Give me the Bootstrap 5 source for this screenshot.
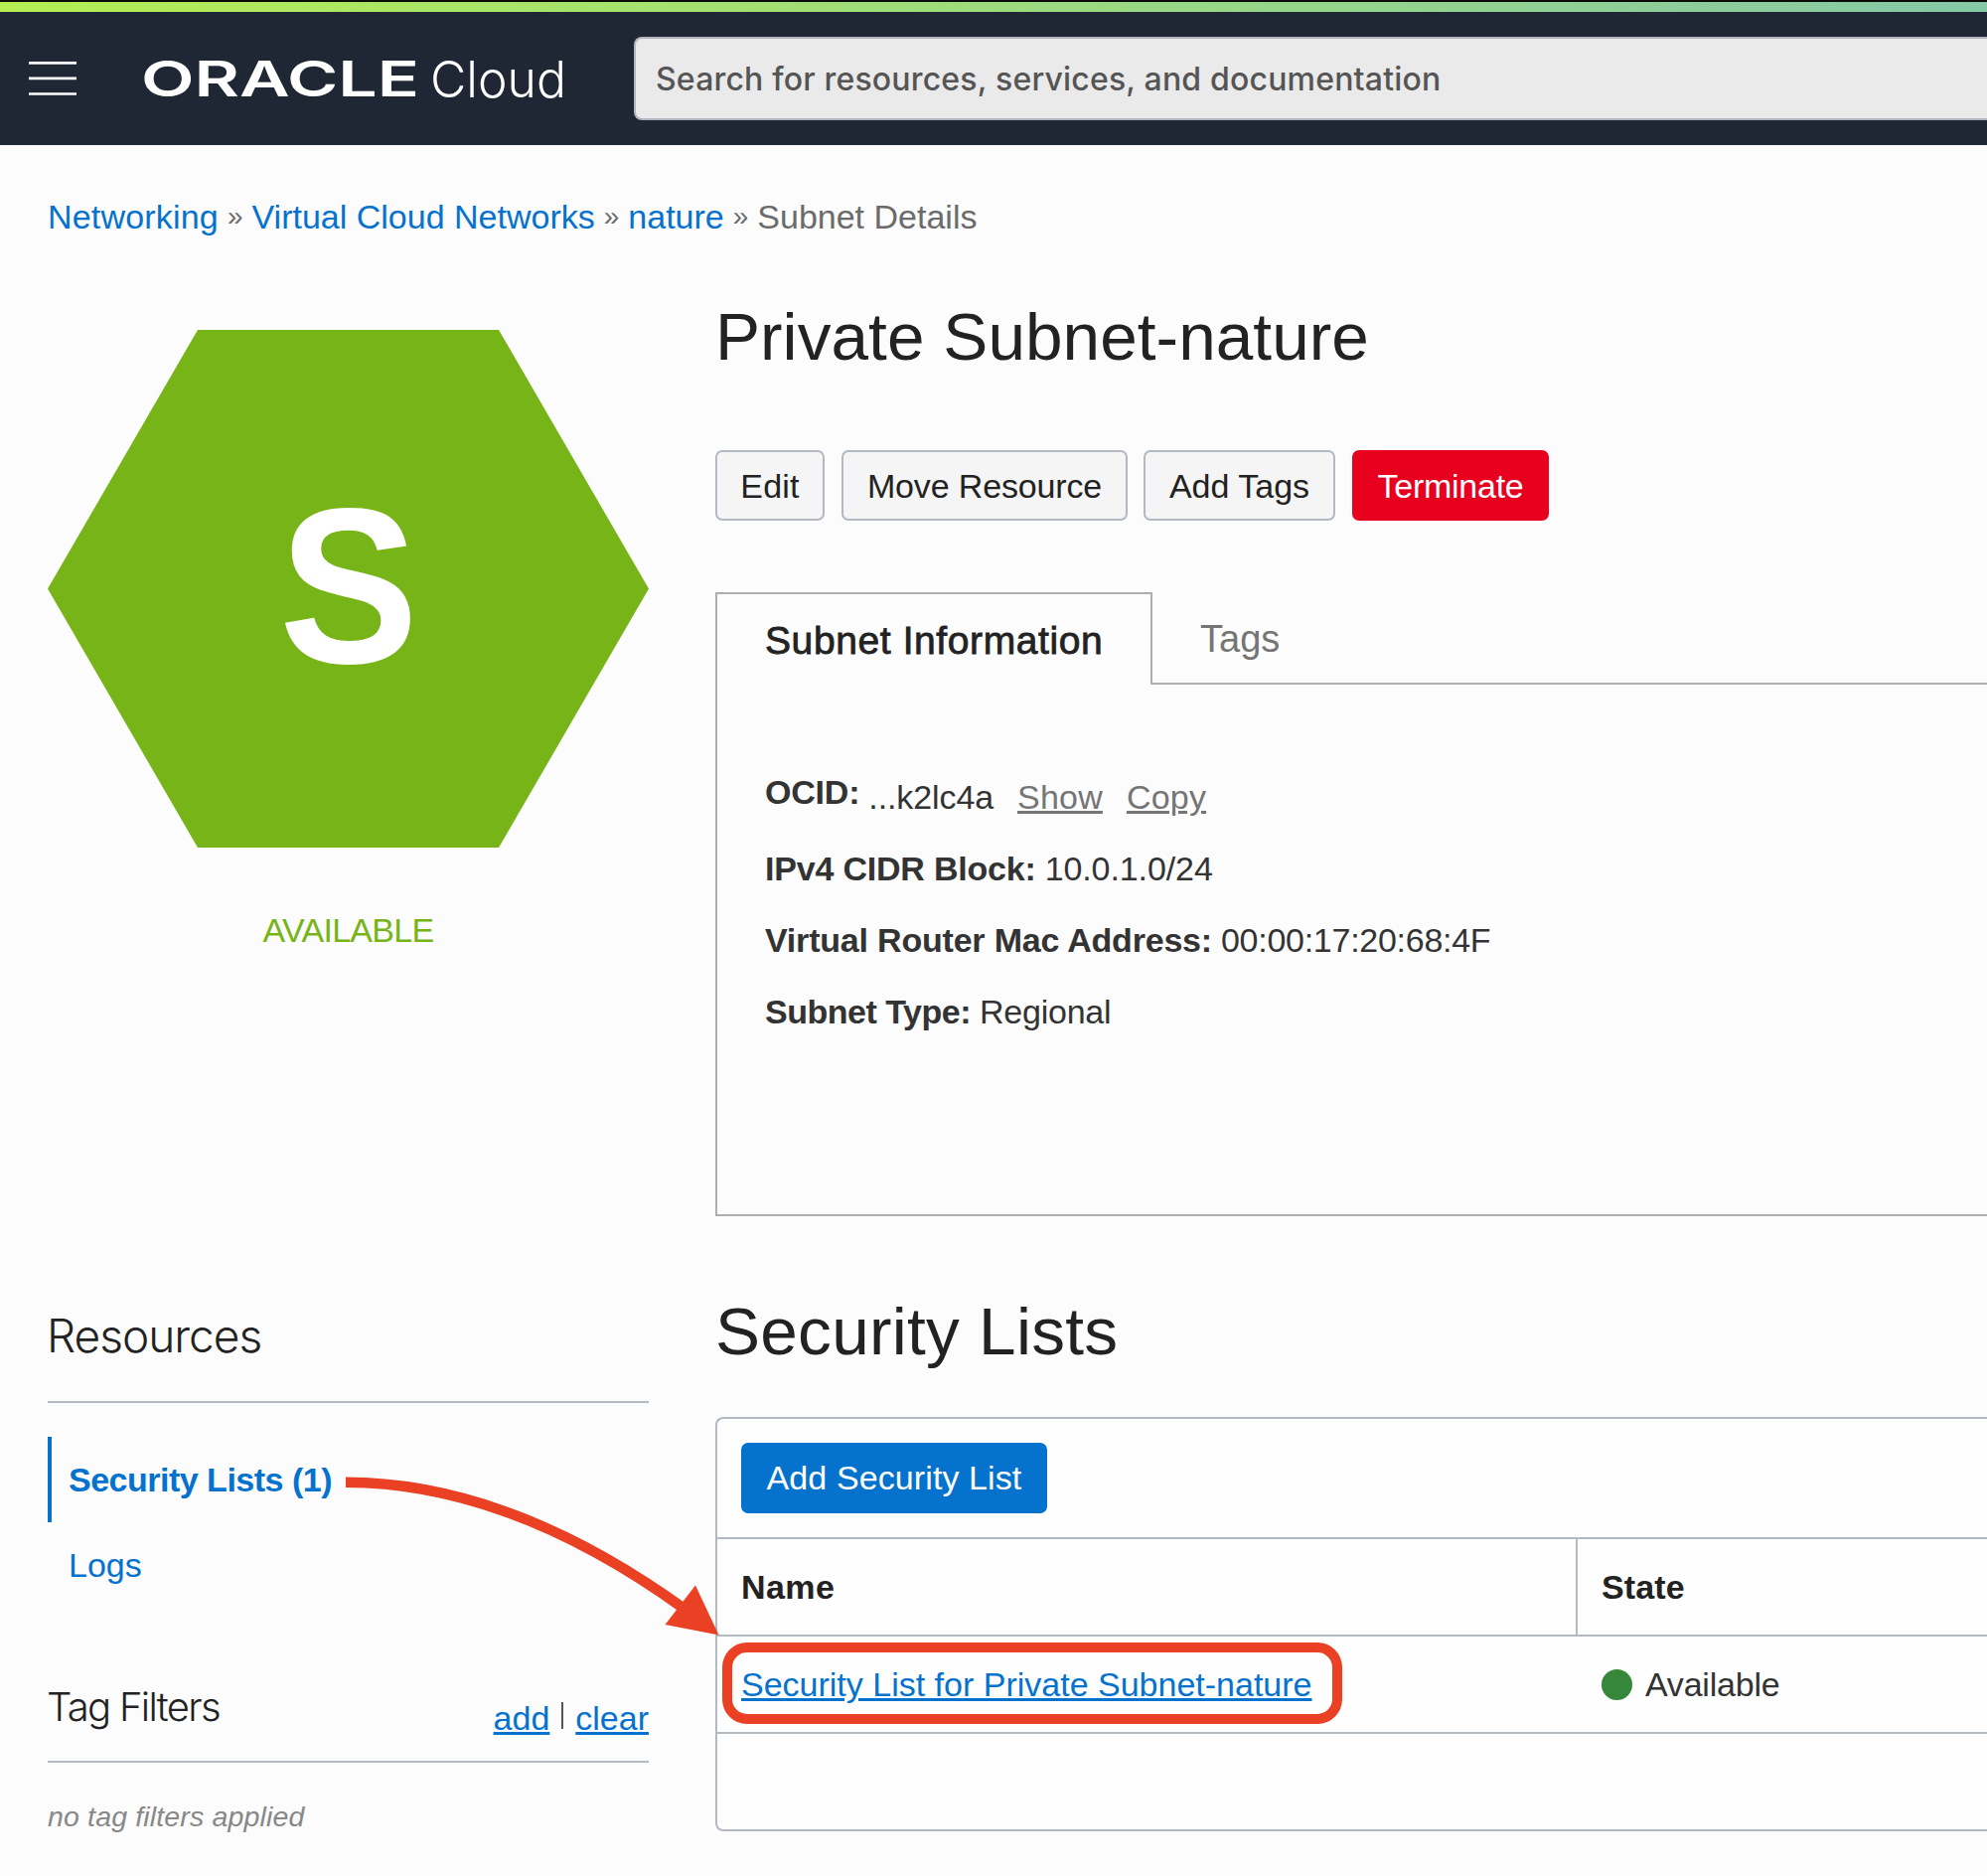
<!DOCTYPE html>
<html lang="en">
<head>
<meta charset="utf-8">
<meta name="viewport" content="width=device-width, initial-scale=1">
<title>Private Subnet-nature</title>
<link href="https://cdn.jsdelivr.net/npm/bootstrap@5.3.0/dist/css/bootstrap.min.css" rel="stylesheet">
<style>
:root{--link:#0572ce;--line:#b2b9c3;--hot:#ea4024}
body{font-family:"Liberation Sans",Arial,sans-serif;font-size:34px;line-height:40px;color:#333;background:#fcfcfc;width:2000px;height:1888px;overflow:hidden;position:relative}
a{color:var(--link)}
.top-black{height:2px;background:#0b0b08}
.top-stripe{height:10px;background:linear-gradient(90deg,#b4ee53,#85c8a6)}
.top-nav{height:134px;background:#1e2733;padding:0 0 0 29px;flex-wrap:nowrap;justify-content:flex-start}
.brand-cell{width:561px;padding-left:66px}
.brand-cell svg{overflow:visible}
.search-box{height:84px;border:2px solid #b0b5bf;border-right:0;border-radius:8px 0 0 8px;background:#eaeaea;color:#555;font-family:Inter,sans-serif;font-size:32px;font-weight:450;letter-spacing:.18px;padding:1px 20px;line-height:80px}
.crumbs{padding:52px 0 0 48px;color:#6b6b6b}
.crumbs a{text-decoration:none}
.crumbs a:first-child{letter-spacing:.19px}
.crumbs .sep{font-size:28px;margin:0 9px}
.side{width:605px;margin-left:48px;margin-right:67px}
.hexagon{margin-top:94px}
.state-text{margin-top:63px;color:#77b418;letter-spacing:-.7px}
.page-title{font-size:67.5px;line-height:80px;color:#222;margin:61px 0 0;font-weight:400;letter-spacing:.06px}
.actions{margin-top:74px;gap:17px}
.actions .btn,.btn-add{height:71px;font-size:34px;line-height:40px;border-radius:7px;border-width:2px;padding:0;display:flex;align-items:center;justify-content:center}
.btn-plain{background:#f5f5f5;border-color:var(--line);color:#222}
.btn-end{background:#e8001f;border-color:#e8001f;color:#fff;letter-spacing:-.25px}
.w-edit{width:110px;letter-spacing:.2px}
.w-move{width:288px;letter-spacing:-.15px;margin-right:-1px}
.w-tags{width:193px}
.w-end{width:198px}
.tab-strip{margin-top:72px;height:93px}
.tab-on{width:440px;border:2px solid #aeaeae;border-bottom:0;padding:25px 0 0 48px;font-size:39px;line-height:44px;color:#222;-webkit-text-stroke:.8px #222;letter-spacing:.6px}
.tab-off{border-bottom:2px solid #aeaeae;padding:25px 0 0 48px;font-size:38px;line-height:44px;color:#757575}
.info{height:535px;border:2px solid #aeaeae;border-width:0 0 2px 2px;padding:77px 0 0 48px}
.info-row{height:72px;line-height:72px;white-space:nowrap;display:flex;align-items:center;gap:9px;letter-spacing:-.1px}
.info-row b{letter-spacing:-.2px}
.info-row a{color:#757575;margin-left:15px;letter-spacing:.2px}
.info-row.tight{letter-spacing:-.27px}
.info-row.tighter,.info-row.tighter b{letter-spacing:-.48px}
.info-row.tighter span{letter-spacing:-.25px}
.ocid-label{margin-bottom:10px}
.side-title{margin-top:93px;height:95px;border-bottom:2px solid var(--line);font-family:Inter,sans-serif;font-size:46px;line-height:55px;color:#222;font-weight:300;letter-spacing:-1px;text-indent:-1px}
.side-nav{margin-top:34px}
.side-nav a{height:86px;line-height:86px;padding:0 0 0 17px;border-left:4px solid transparent;color:var(--link)}
.side-nav a.active{border-left-color:var(--link);font-weight:700;letter-spacing:-.5px}
.filters{margin-top:76px;height:80px;border-bottom:2px solid var(--line)}
.filters h3{font-family:Inter,sans-serif;font-size:40px;line-height:47px;color:#222;margin:0;font-weight:300;letter-spacing:-1.7px;text-indent:-1px}
.filters .tools{margin-top:15px}
.tool-bar{width:2px;height:27px;background:#555;margin:4px 12px 0}
.no-filters{margin-top:36px;font-size:28.5px;line-height:36px;color:#888;font-style:italic;letter-spacing:.15px}
.lists-title{margin-top:76px;letter-spacing:.28px}
.list-box{margin-top:46px;height:417px;border:2px solid var(--line);border-right:0;border-radius:8px 0 0 8px;background:#fefefe}
.list-tools{height:121px;padding:24px 0 0 24px;border-bottom:2px solid var(--line)}
.btn-add{width:308px;background:var(--link);color:#fff;border:0;padding-bottom:1px;letter-spacing:.1px}
.list-table{border-collapse:separate;border-spacing:0;table-layout:fixed;margin:0;--bs-table-bg:transparent;color:#333}
.list-table th,.list-table td{height:98px;padding:0 0 0 24px;border-bottom:2px solid var(--line);vertical-align:middle}
.list-table th{color:#222;letter-spacing:.15px}
.list-table td span{letter-spacing:-.2px}
.list-table th:first-child{width:866px;border-right:2px solid var(--line);letter-spacing:.4px}
.dot{width:31px;height:31px;border-radius:50%;background:#37873a;margin-right:13px}
.overlay{left:0;top:0;pointer-events:none}
</style>
</head>
<body>
<div class="top-black"></div><div class="top-stripe"></div>
<nav class="navbar top-nav">
  <svg width="48" height="36" viewBox="0 0 48 36" stroke="#fff" stroke-width="2.7"><path d="M0 2.3h48M0 17.8h48M0 33.5h48"/></svg>
  <div class="brand-cell flex-shrink-0">
    <svg width="430" height="60" viewBox="0 0 430 60" fill="#fff" class="d-block">
      <text x="-1" y="48" font-family="Inter" font-weight="560" font-size="49" textLength="280" lengthAdjust="spacingAndGlyphs">ORACLE</text>
      <text x="290" y="48.500" font-family="Inter" font-weight="300" font-size="51" textLength="137" lengthAdjust="spacingAndGlyphs">Cloud</text>
    </svg>
  </div>
  <div class="search-box flex-grow-1">Search for resources, services, and documentation</div>
</nav>
<div class="crumbs d-flex">
  <a href="#">Networking</a><span class="sep">»</span><a href="#">Virtual Cloud Networks</a><span class="sep">»</span><a href="#">nature</a><span class="sep">»</span><span>Subnet Details</span>
</div>
<div class="d-flex">
  <aside class="side flex-shrink-0">
    <svg class="hexagon d-block" width="605" height="521" viewBox="0 0 605 521"><path fill="#77b418" d="M151 0h303L605 260.500 454 521H151L0 260.500z"/><text x="233" y="334.500" textLength="140" lengthAdjust="spacingAndGlyphs" font-weight="700" font-size="222" fill="#fff">S</text></svg>
    <div class="state-text text-center">AVAILABLE</div>
  </aside>
  <main class="flex-grow-1">
    <h1 class="page-title">Private Subnet-nature</h1>
    <div class="actions d-flex">
      <button class="btn btn-plain w-edit">Edit</button>
      <button class="btn btn-plain w-move">Move Resource</button>
      <button class="btn btn-plain w-tags">Add Tags</button>
      <button class="btn btn-end w-end">Terminate</button>
    </div>
    <div class="tab-strip d-flex">
      <div class="tab-on">Subnet Information</div>
      <div class="tab-off flex-grow-1">Tags</div>
    </div>
    <div class="info">
      <div class="info-row"><b class="ocid-label">OCID:</b><span>...k2lc4a</span><a href="#">Show</a><a href="#">Copy</a></div>
      <div class="info-row"><b>IPv4 CIDR Block:</b><span>10.0.1.0/24</span></div>
      <div class="info-row tight"><b>Virtual Router Mac Address:</b><span>00:00:17:20:68:4F</span></div>
      <div class="info-row tighter"><b>Subnet Type:</b><span>Regional</span></div>
    </div>
  </main>
</div>
<div class="d-flex">
  <aside class="side flex-shrink-0">
    <h2 class="side-title">Resources</h2>
    <nav class="side-nav nav flex-column">
      <a href="#" class="nav-link active">Security Lists (1)</a>
      <a href="#" class="nav-link">Logs</a>
    </nav>
    <div class="filters d-flex justify-content-between">
      <h3>Tag Filters</h3>
      <div class="tools d-flex"><a href="#">add</a><i class="tool-bar"></i><a href="#">clear</a></div>
    </div>
    <div class="no-filters">no tag filters applied</div>
  </aside>
  <section class="flex-grow-1">
    <h2 class="page-title lists-title">Security Lists</h2>
    <div class="list-box">
      <div class="list-tools"><button class="btn btn-add">Add Security List</button></div>
      <table class="table list-table">
        <tr><th>Name</th><th>State</th></tr>
        <tr><td><a href="#">Security List for Private Subnet-nature</a></td><td><div class="d-flex align-items-center"><i class="dot"></i><span>Available</span></div></td></tr>
      </table>
    </div>
  </section>
</div>
<svg class="overlay position-absolute" width="2000" height="1888" viewBox="0 0 2000 1888">
  <path d="M348 1491.800Q513 1492 690 1620" fill="none" stroke="#ea4024" stroke-width="10.500"/>
  <path d="M723.500 1645.500 669.500 1635 700 1595.500z" fill="#ea4024"/>
  <rect x="732" y="1658" width="614" height="72" rx="20" fill="none" stroke="#ea4024" stroke-width="10"/>
</svg>
<script src="https://cdn.jsdelivr.net/npm/bootstrap@5.3.0/dist/js/bootstrap.bundle.min.js"></script>
</body>
</html>
